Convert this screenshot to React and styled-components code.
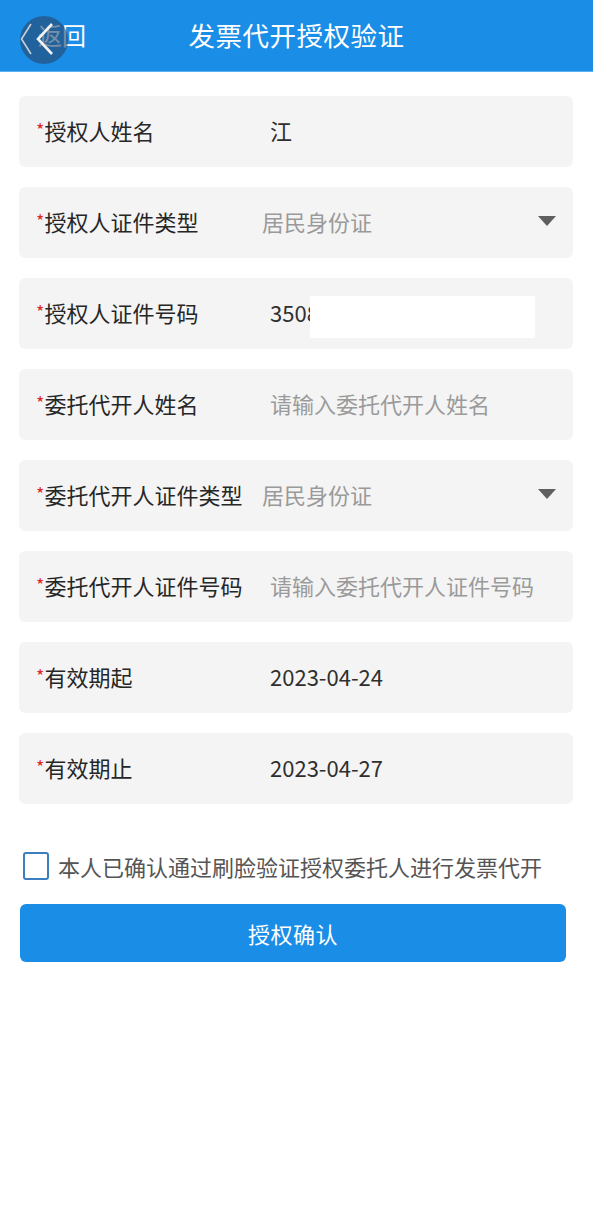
import React, { useState } from 'react'
import styled, { createGlobalStyle } from 'styled-components'

const GlobalStyle = createGlobalStyle`
  html, body {
    margin: 0;
    padding: 0;
    background: #fff;
    font-family: "Noto Sans CJK SC", "Noto Sans", sans-serif;
  }
`

const fields = [
  { label: '授权人姓名', value: '江', kind: 'input' },
  { label: '授权人证件类型', value: '居民身份证', kind: 'select' },
  { label: '授权人证件号码', value: '3508', kind: 'input', masked: true },
  { label: '委托代开人姓名', placeholder: '请输入委托代开人姓名', kind: 'input' },
  { label: '委托代开人证件类型', value: '居民身份证', kind: 'select' },
  { label: '委托代开人证件号码', placeholder: '请输入委托代开人证件号码', kind: 'input' },
  { label: '有效期起', value: '2023-04-24', kind: 'input' },
  { label: '有效期止', value: '2023-04-27', kind: 'input' },
]

function App() {
  const [checked, setChecked] = useState(false)

  return (
    <Page>
      <GlobalStyle />
      <Header>
        <Back>返回</Back>
        <Title>发票代开授权验证</Title>
        <FloatBack>
          <svg width="48" height="48" viewBox="0 0 48 48">
            <path d="M11 8 L1.5 23 L11 38" fill="none" stroke="#c9cfd6" strokeWidth="1.6" />
            <path d="M32 8 L18 23 L32 38" fill="none" stroke="#f2f2f2" strokeWidth="2.6" />
          </svg>
        </FloatBack>
      </Header>

      <Form>
        {fields.map((f, i) => (
          <Row key={i}>
            <Label><Star>*</Star>{f.label}</Label>
            <Value select={f.kind === 'select'} muted={f.kind === 'select' || !f.value}>
              {f.value || f.placeholder}
            </Value>
            {f.kind === 'select' && <Caret />}
            {f.masked && <Mask />}
          </Row>
        ))}
      </Form>

      <Agree onClick={() => setChecked(!checked)}>
        <Box checked={checked} />
        <AgreeText>本人已确认通过刷脸验证授权委托人进行发票代开</AgreeText>
      </Agree>

      <Submit>授权确认</Submit>
    </Page>
  )
}

export default App

const Page = styled.div`
  width: 593px;
  min-height: 1215px;
  background: #fff;
`

const Header = styled.div`
  position: relative;
  height: 72px;
  background: #1a8de6;
  display: flex;
  align-items: center;
  justify-content: center;
  border-bottom: 1px solid #5fb0ee;
  box-sizing: border-box;
`

const Back = styled.div`
  position: absolute;
  left: 38px;
  top: 19px;
  font-size: 24px;
  color: #fff;
  line-height: 32px;
`

const FloatBack = styled.div`
  position: absolute;
  left: 20px;
  top: 16px;
  width: 48px;
  height: 48px;
  border-radius: 50%;
  background: rgba(38, 72, 112, 0.62);
  svg {
    display: block;
    overflow: visible;
  }
`

const Title = styled.div`
  font-size: 26.5px;
  color: #fff;
  letter-spacing: 0.5px;
  margin-top: -2px;
`

const Form = styled.div`
  display: flex;
  flex-direction: column;
  gap: 20px;
  padding: 24px 20px 0 19px;
`

const Row = styled.div`
  position: relative;
  height: 71px;
  background: #f4f4f4;
  border-radius: 6px;
  display: flex;
  align-items: center;
  padding-left: 17px;
  padding-bottom: 3px;
  box-sizing: border-box;
`

const Label = styled.div`
  width: 226px;
  flex-shrink: 0;
  font-size: 22px;
  color: #262626;
  white-space: nowrap;
`

const Star = styled.span`
  color: #e0262b;
  font-size: 18px;
  position: relative;
  top: -3px;
`

const Value = styled.div`
  flex: 1;
  font-size: 22px;
  color: ${p => (p.muted ? '#9a9a9a' : '#2f2f2f')};
  margin-left: ${p => (p.select ? '0' : '8px')};
  white-space: nowrap;
`

const Caret = styled.div`
  width: 0;
  height: 0;
  border-left: 9px solid transparent;
  border-right: 9px solid transparent;
  border-top: 10px solid #5f5f5f;
  margin-right: 17px;
`

const Mask = styled.div`
  position: absolute;
  left: 291px;
  top: 18px;
  width: 225px;
  height: 42px;
  background: #fff;
`

const Agree = styled.div`
  display: flex;
  align-items: center;
  gap: 9px;
  margin: 46px 0 0 23px;
  cursor: pointer;
`

const Box = styled.div`
  width: 22px;
  height: 24px;
  border: 2px solid #3c7fbf;
  border-radius: 3px;
  background: ${p => (p.checked ? '#3c7fbf' : '#fff')};
`

const AgreeText = styled.div`
  font-size: 22px;
  color: #555;
`

const Submit = styled.button`
  display: block;
  margin: 22px 0 0 20px;
  width: 546px;
  height: 58px;
  border: none;
  border-radius: 6px;
  background: #1a8de6;
  color: #fff;
  font-family: "Noto Sans CJK SC", "Noto Sans", sans-serif;
  font-size: 22px;
  letter-spacing: 0.5px;
`
